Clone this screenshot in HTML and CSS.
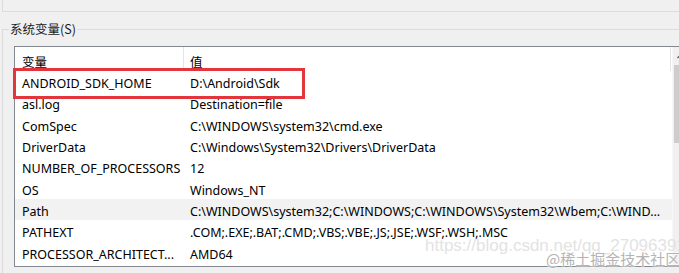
FILE: index.html
```html
<!DOCTYPE html>
<html lang="zh-CN">
<head>
<meta charset="utf-8">
<title>系统变量</title>
<link rel="stylesheet" href="styles.css">
</head>
<body>
<div class="page">
  <div class="prev-group"></div>
  <fieldset class="group">
    <legend class="group-label">系统变量(S)</legend>
    <div class="listbox">
      <div class="list">
        <div class="head">
          <div class="hcell c1">变量</div>
          <div class="hcell c2">值</div>
        </div>
        <div class="row"><div class="cell c1">ANDROID_SDK_HOME</div><div class="cell c2">D:\Android\Sdk</div></div>
        <div class="row"><div class="cell c1">asl.log</div><div class="cell c2">Destination=file</div></div>
        <div class="row"><div class="cell c1">ComSpec</div><div class="cell c2">C:\WINDOWS\system32\cmd.exe</div></div>
        <div class="row"><div class="cell c1">DriverData</div><div class="cell c2">C:\Windows\System32\Drivers\DriverData</div></div>
        <div class="row"><div class="cell c1">NUMBER_OF_PROCESSORS</div><div class="cell c2">12</div></div>
        <div class="row"><div class="cell c1">OS</div><div class="cell c2">Windows_NT</div></div>
        <div class="row row-hover"><div class="cell c1">Path</div><div class="cell c2">C:\WINDOWS\system32;C:\WINDOWS;C:\WINDOWS\System32\Wbem;C:\WIND...</div></div>
        <div class="row"><div class="cell c1">PATHEXT</div><div class="cell c2">.COM;.EXE;.BAT;.CMD;.VBS;.VBE;.JS;.JSE;.WSF;.WSH;.MSC</div></div>
        <div class="row"><div class="cell c1">PROCESSOR_ARCHITECT...</div><div class="cell c2">AMD64</div></div>
      </div>
      <div class="scrollbar">
        <div class="sb-btn">
          <svg width="9" height="6" viewBox="0 0 9 6"><path d="M0.5 5 L4.5 1 L8.5 5" fill="none" stroke="#606060" stroke-width="1.3"/></svg>
        </div>
        <div class="sb-thumb"></div>
        <div class="sb-track"></div>
      </div>
    </div>
  </fieldset>
  <div class="highlight"></div>
  <div class="wm-url">https://blog.csdn.net/qq_27096391</div>
  <div class="wm-brand">@稀土掘金技术社区</div>
</div>
</body>
</html>
```

FILE: styles.css
```css
html, body {
  margin: 0;
  padding: 0;
}
body {
  background: #f0f0f0;
  width: 679px;
  height: 273px;
  overflow: hidden;
  font-family: "Noto Sans", "Noto Sans CJK SC", sans-serif;
  font-size: 12.5px;
  color: #000;
}
.page {
  position: relative;
  width: 679px;
  height: 273px;
  overflow: hidden;
}
.prev-group {
  margin-left: 2px;
  width: 720px;
  height: 11px;
  border-left: 1px solid #dcdcdc;
  border-bottom: 1px solid #dcdcdc;
}
.group {
  margin: 9px 0 0 2px;
  padding: 9px 0 0 11px;
  width: 720px;
  height: 300px;
  border: 1px solid #dcdcdc;
  box-sizing: border-box;
}
.group-label {
  padding: 0 1px;
  margin-left: -5px;
  font-family: "Noto Sans CJK SC", sans-serif;
  font-size: 12.5px;
  line-height: 16px;
  color: #1a1a1a;
}
.listbox {
  display: flex;
  width: 675px;
  height: 219px;
  background: #fff;
  border-top: 1px solid #828790;
  border-left: 1px solid #828790;
  border-bottom: 1px solid #828790;
}
.list {
  flex: 0 0 657px;
  display: flex;
  flex-direction: column;
}
.head {
  display: flex;
  height: 24px;
  flex: 0 0 24px;
}
.hcell {
  display: flex;
  align-items: center;
  padding-top: 5px;
  box-sizing: border-box;
  font-family: "Noto Sans CJK SC", sans-serif;
  font-size: 12.5px;
  border-right: 1px solid #e5e5e5;
}
.hcell.c1 { width: 169px; padding-left: 7px; }
.hcell.c2 { width: 487px; padding-left: 6px; }
.row {
  display: flex;
  height: 21.33px;
  flex: 0 0 21.33px;
  align-items: center;
  padding-top: 4px;
  box-sizing: border-box;
}
.row-hover {
  background: #f2f2f2;
}
.cell {
  white-space: nowrap;
  overflow: hidden;
}
.cell.c1 { width: 168px; padding-left: 7px; box-sizing: border-box; }
.cell.c2 { width: 482px; padding-left: 7px; }
.scrollbar {
  flex: 0 0 17px;
  display: flex;
  flex-direction: column;
  background: #f0f0f0;
  border-left: 1px solid #f7f7f7;
}
.sb-btn {
  height: 18px;
  display: flex;
  align-items: center;
  justify-content: center;
}
.sb-thumb {
  height: 78px;
  background: #cdcdcd;
  margin: 0 1px;
}
.sb-track { flex: 1; }
.highlight {
  position: absolute;
  left: 13px;
  top: 68px;
  width: 292px;
  height: 31px;
  border: 3px solid #e2363c;
  box-sizing: border-box;
}
.wm-url {
  position: absolute;
  left: 425px;
  top: 236px;
  font-family: "Liberation Sans", sans-serif;
  font-size: 17px;
  color: #e3e3e3;
  white-space: nowrap;
}
.wm-brand {
  position: absolute;
  left: 546px;
  top: 250px;
  font-family: "Noto Sans CJK SC", sans-serif;
  font-size: 15px;
  line-height: 18px;
  color: #b4b4b4;
  text-shadow: 0 0 2px #fff, 0 0 2px #fff;
  white-space: nowrap;
}
```
